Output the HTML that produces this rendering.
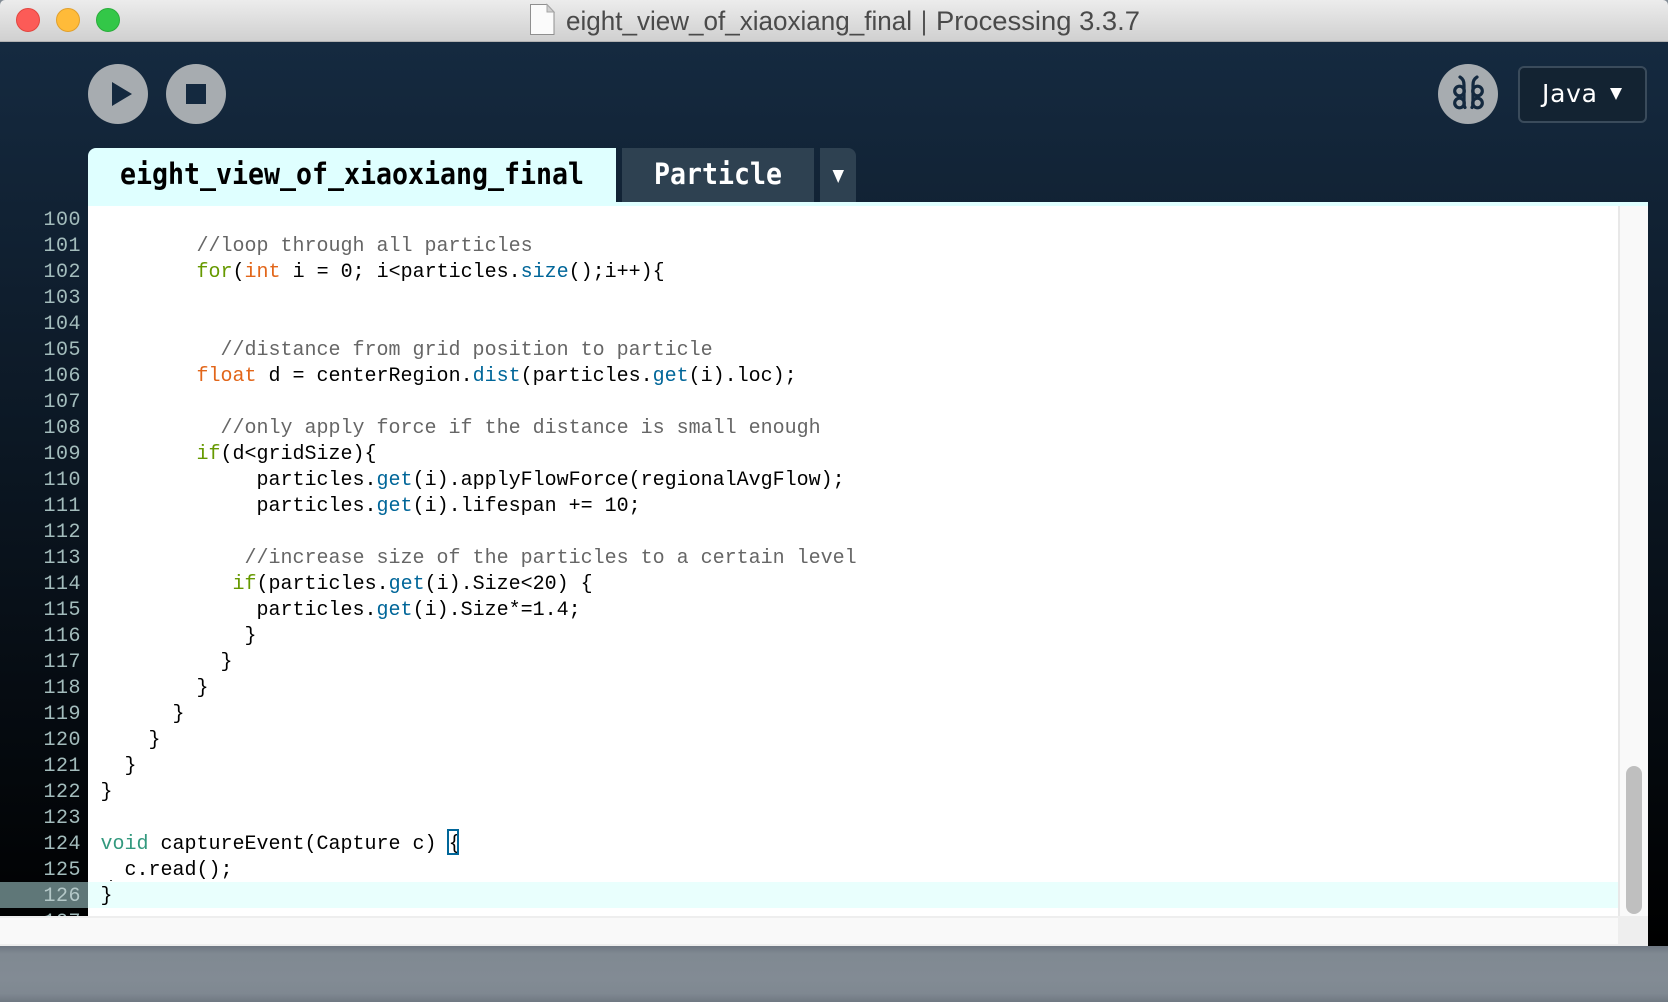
<!DOCTYPE html>
<html>
<head>
<meta charset="utf-8">
<style>
html,body{margin:0;padding:0;width:1668px;height:1002px;overflow:hidden;background:#828b94}
#bg{position:absolute;left:0;top:41px;width:1668px;height:905px;background:linear-gradient(#152a40 0%,#000 100%)}
#title{position:absolute;left:0;top:0;width:1668px;height:41px;background:linear-gradient(#ececec,#d0d0d0);border-bottom:1px solid #b2b2b2;border-radius:5px 5px 0 0;box-sizing:content-box}
.dot{position:absolute;top:8px;width:24px;height:24px;border-radius:50%;box-sizing:border-box}
.btn{position:absolute;top:64px;width:60px;height:60px;border-radius:50%;background:#a7acb0}
#t1,#t2,#t3{position:absolute;top:148px;height:54px}
#t1{left:88px;width:528px;height:57px;background:#dfffff;border-radius:8px 0 0 0}
#t2{left:622px;width:192px;background:#2e4151}
#t3{left:820px;width:36px;background:#2e4151;border-radius:0 8px 0 0}
#java{position:absolute;left:1518px;top:66px;width:129px;height:57px;box-sizing:border-box;border:2px solid #3a4b5b;border-radius:6px;background:#132332}
#strip{position:absolute;left:88px;top:202px;width:1560px;height:4px;background:#dfffff}
#ed{position:absolute;left:88px;top:206px;width:1530px;height:710px;background:#fff;overflow:hidden}
#hl{position:absolute;left:0;top:676px;width:1530px;height:26px;background:#e9fffd}
#vs{position:absolute;left:1618px;top:206px;width:30px;height:710px;background:#f9f9f9;border-left:2px solid #e8e8e8;box-sizing:border-box}
#th{position:absolute;left:1626px;top:766px;width:16px;height:148px;border-radius:8px;background:#bfbfbf}
#hs{position:absolute;left:0;top:916px;width:1618px;height:30px;background:#eee}
#hs2{position:absolute;left:0;top:918px;width:1618px;height:26px;background:#f9f9f9}
#corner{position:absolute;left:1618px;top:916px;width:30px;height:30px;background:#eee}
#hsl{position:absolute;left:0;top:946px;width:1668px;height:56px;background:linear-gradient(#6e7782 0,#808992 14%,#828b94 60%,#7f8891 85%,#6f7882 100%)}
#nums{position:absolute;left:0;top:206px;width:88px;height:710px;overflow:hidden}
.n{position:absolute;left:0;width:81px;text-align:right;height:26px;font:20px/30px "Liberation Mono",monospace;letter-spacing:.5px;color:#a3bcbc}
#nhl{position:absolute;left:0;top:676px;width:88px;height:26px;background:#5f7778}
.l{position:absolute;left:12.5px;height:26px;font:20px/30px "Liberation Mono",monospace;color:#000;white-space:pre}
.c{color:#666}.k{color:#669900}.t{color:#e2661a}.f{color:#006699}.v{color:#33997e}
#box{position:absolute;left:359px;top:623px;width:12px;height:26px;border:2px solid #006699;box-sizing:border-box}
svg{position:absolute;overflow:visible}
</style>
</head>
<body>
<div id="bg"></div>

<div id="title">
  <div class="dot" style="left:16px;background:#fc5b57;border:1px solid #e2463f"></div>
  <div class="dot" style="left:56px;background:#ffbb39;border:1px solid #e1a02c"></div>
  <div class="dot" style="left:96px;background:#33c748;border:1px solid #2aad3b"></div>
  <svg style="left:0;top:0" width="1668" height="41">
    <path d="M530.5 4.5H547L554 12V34.5H530.5Z" fill="#fbfbfb" stroke="#8f8f8f" stroke-width="1"/>
    <path d="M547 4.5V12H554Z" fill="#cfcfcf" stroke="#a5a5a5" stroke-width="1"/>
    <g font-family="'Liberation Sans',sans-serif" font-size="26.5" fill="#4a4a4a">
      <text x="566" y="30" textLength="346" lengthAdjust="spacingAndGlyphs">eight_view_of_xiaoxiang_final</text>
      <text x="921" y="30" textLength="6" lengthAdjust="spacingAndGlyphs">|</text>
      <text x="936" y="30" textLength="204" lengthAdjust="spacingAndGlyphs">Processing 3.3.7</text>
    </g>
  </svg>
</div>

<div class="btn" style="left:88px"></div>
<div class="btn" style="left:166px"></div>
<div class="btn" style="left:1438px"></div>
<svg style="left:0;top:0" width="1668" height="148">
  <path d="M112 82L132 94L112 106Z" fill="#14293f"/>
  <rect x="186" y="84" width="20" height="20" fill="#14293f"/>
  <g fill="none" stroke="#14293f" stroke-width="3.200">
    <circle cx="1459.500" cy="91" r="4.800"/>
    <circle cx="1459.500" cy="103" r="4.800"/>
    <circle cx="1477.500" cy="91" r="4.800"/>
    <circle cx="1477.500" cy="103" r="4.800"/>
    <path d="M1460 77C1463 79 1464 81 1464 85V104C1464 105 1464.500 106.500 1465 107.500" stroke-linecap="round"/>
    <path d="M1477 77C1474 79 1473 81 1473 85V104C1473 105 1472.500 106.500 1472 107.500" stroke-linecap="round"/>
  </g>
</svg>

<div id="java"></div>
<svg style="left:0;top:0" width="1668" height="148">
  <text x="1542" y="102" font-family="'DejaVu Sans',sans-serif" font-size="25" fill="#fff" textLength="55">Java</text>
  <path d="M1610 88H1622L1616 100Z" fill="#fff"/>
</svg>

<div id="t1"></div>
<div id="t2"></div>
<div id="t3"><svg style="left:0;top:0" width="36" height="54"><path d="M12.500 22H24L18.200 35Z" fill="#fff"/></svg></div>
<svg style="left:0;top:0" width="1668" height="206">
  <g font-family="'DejaVu Sans Mono',monospace" font-weight="bold" font-size="29">
    <text x="120" y="184" fill="#000" textLength="464" lengthAdjust="spacingAndGlyphs">eight_view_of_xiaoxiang_final</text>
    <text x="654" y="184" fill="#fff" textLength="128" lengthAdjust="spacingAndGlyphs">Particle</text>
  </g>
</svg>
<div id="strip"></div>

<div id="ed">
  <div id="hl"></div>
  <div class="l" style="top:26px"><span class="c">        //loop through all particles</span></div>
  <div class="l" style="top:52px">        <span class="k">for</span>(<span class="t">int</span> i = 0; i&lt;particles.<span class="f">size</span>();i++){</div>
  <div class="l" style="top:130px"><span class="c">          //distance from grid position to particle</span></div>
  <div class="l" style="top:156px">        <span class="t">float</span> d = centerRegion.<span class="f">dist</span>(particles.<span class="f">get</span>(i).loc);</div>
  <div class="l" style="top:208px"><span class="c">          //only apply force if the distance is small enough</span></div>
  <div class="l" style="top:234px">        <span class="k">if</span>(d&lt;gridSize){</div>
  <div class="l" style="top:260px">             particles.<span class="f">get</span>(i).applyFlowForce(regionalAvgFlow);</div>
  <div class="l" style="top:286px">             particles.<span class="f">get</span>(i).lifespan += 10;</div>
  <div class="l" style="top:338px"><span class="c">            //increase size of the particles to a certain level</span></div>
  <div class="l" style="top:364px">           <span class="k">if</span>(particles.<span class="f">get</span>(i).Size&lt;20) {</div>
  <div class="l" style="top:390px">             particles.<span class="f">get</span>(i).Size*=1.4;</div>
  <div class="l" style="top:416px">            }</div>
  <div class="l" style="top:442px">          }</div>
  <div class="l" style="top:468px">        }</div>
  <div class="l" style="top:494px">      }</div>
  <div class="l" style="top:520px">    }</div>
  <div class="l" style="top:546px">  }</div>
  <div class="l" style="top:572px">}</div>
  <div class="l" style="top:624px"><span class="v">void</span> captureEvent(Capture c) {</div>
  <div class="l" style="top:650px">  c.read();</div>
  <div class="l" style="top:676px">}</div>
  <div id="box"></div>
  <div style="position:absolute;left:22px;top:674px;width:2px;height:1px;background:#444"></div>
</div>

<div id="vs"></div>
<div id="th"></div>
<div id="hs"></div>
<div id="hs2"></div>
<div id="corner"></div>
<div id="hsl"></div>

<div id="nums">
  <div id="nhl"></div>
  <div class="n" style="top:0">100</div>
  <div class="n" style="top:26px">101</div>
  <div class="n" style="top:52px">102</div>
  <div class="n" style="top:78px">103</div>
  <div class="n" style="top:104px">104</div>
  <div class="n" style="top:130px">105</div>
  <div class="n" style="top:156px">106</div>
  <div class="n" style="top:182px">107</div>
  <div class="n" style="top:208px">108</div>
  <div class="n" style="top:234px">109</div>
  <div class="n" style="top:260px">110</div>
  <div class="n" style="top:286px">111</div>
  <div class="n" style="top:312px">112</div>
  <div class="n" style="top:338px">113</div>
  <div class="n" style="top:364px">114</div>
  <div class="n" style="top:390px">115</div>
  <div class="n" style="top:416px">116</div>
  <div class="n" style="top:442px">117</div>
  <div class="n" style="top:468px">118</div>
  <div class="n" style="top:494px">119</div>
  <div class="n" style="top:520px">120</div>
  <div class="n" style="top:546px">121</div>
  <div class="n" style="top:572px">122</div>
  <div class="n" style="top:598px">123</div>
  <div class="n" style="top:624px">124</div>
  <div class="n" style="top:650px">125</div>
  <div class="n" style="top:676px;color:#b4c8c8">126</div>
  <div class="n" style="top:702px">127</div>
</div>
</body>
</html>
